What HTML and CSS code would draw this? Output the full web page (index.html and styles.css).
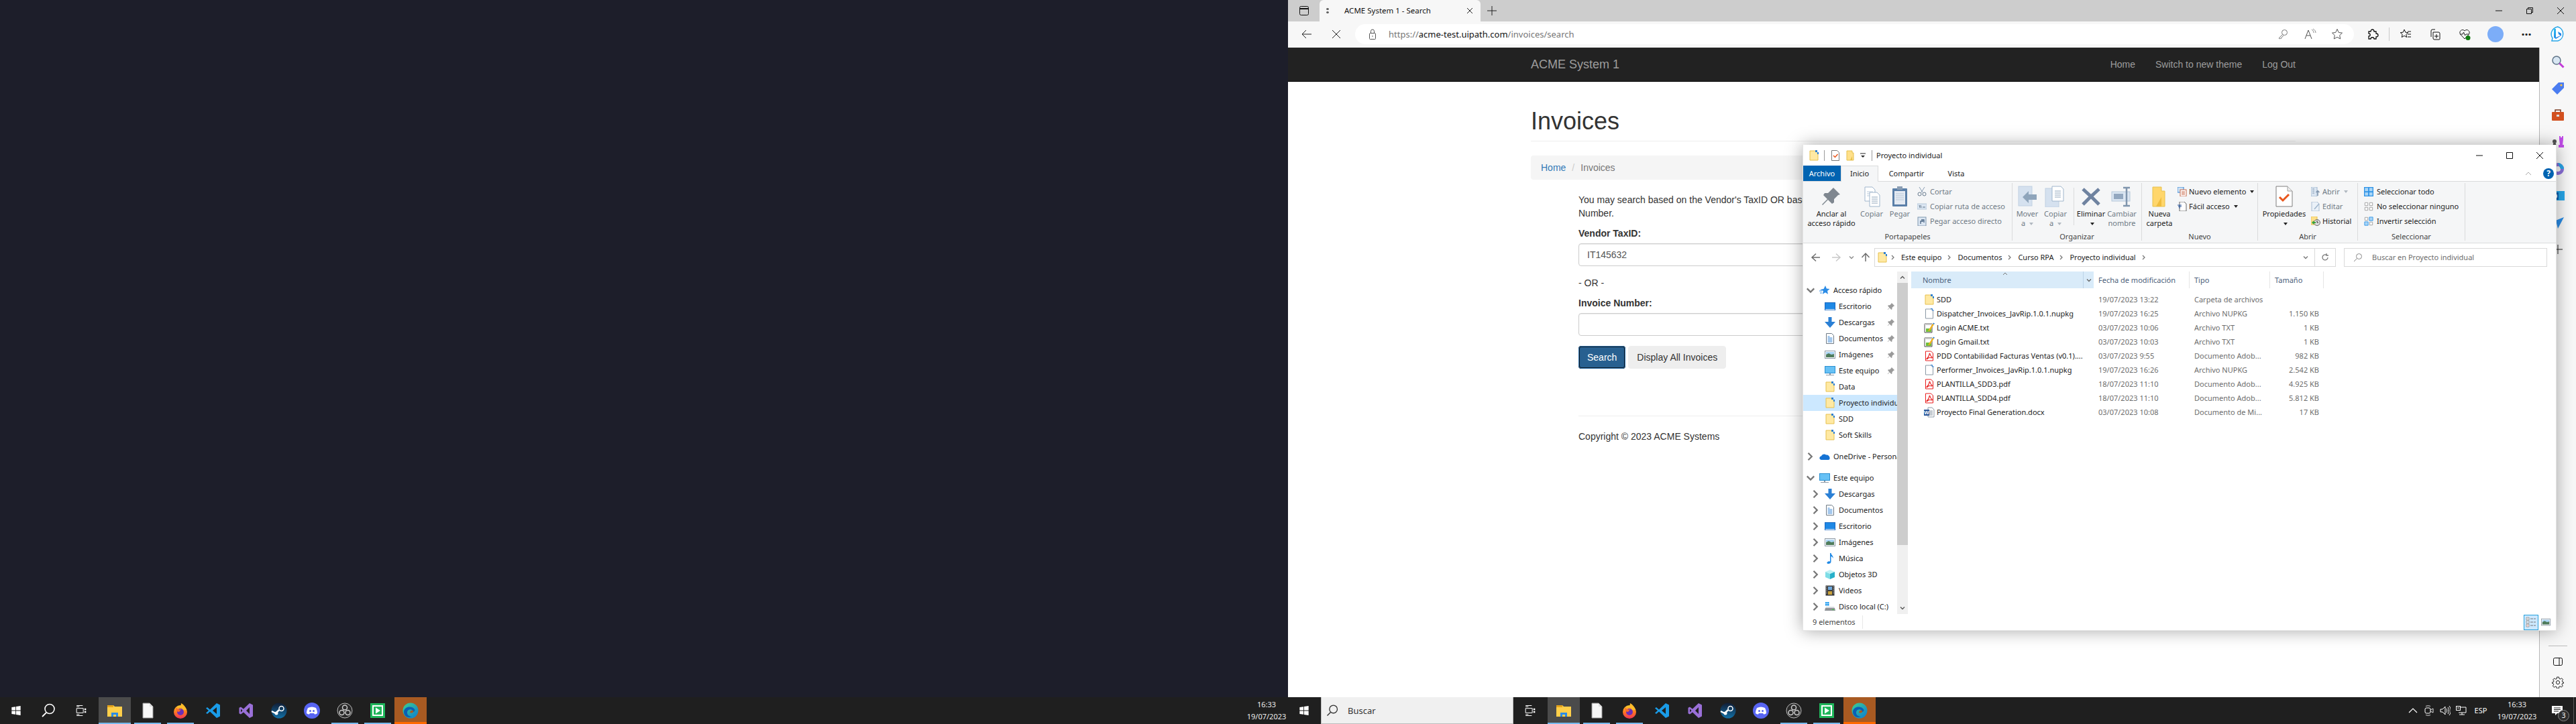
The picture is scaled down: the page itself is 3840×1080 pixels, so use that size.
FILE: index.html
```html
<!DOCTYPE html>
<html lang="es">
<head>
<meta charset="utf-8">
<title>ACME System 1 - Search</title>
<link rel="stylesheet" href="styles.css">
</head>
<body>
<svg class="sprite" aria-hidden="true">
  <defs>
    <linearGradient id="gFox" x1="0" y1="0" x2="0" y2="1"><stop offset="0" stop-color="#ffd02e"/><stop offset=".5" stop-color="#ff7a1f"/><stop offset="1" stop-color="#f0305a"/></linearGradient>
    <linearGradient id="gEdge" x1="0" y1="0" x2="1" y2="1"><stop offset="0" stop-color="#3bd08f"/><stop offset="1" stop-color="#0c7cd5"/></linearGradient>
    <linearGradient id="gBing" x1="0" y1="0" x2="1" y2="1"><stop offset="0" stop-color="#2ec4f1"/><stop offset="1" stop-color="#1762e0"/></linearGradient>
    <linearGradient id="gSteam" x1="0" y1="0" x2="0" y2="1"><stop offset="0" stop-color="#111d35"/><stop offset="1" stop-color="#126fa5"/></linearGradient>
    <symbol id="folder" viewBox="0 0 16 16"><path d="M2 1h9l3 3v11H2z" fill="#ffe9a3" stroke="#e6c04e"/><path d="M10 0h3v3h-3zM13 3h2v3h-2z" fill="#2f7fd1"/></symbol>
    <symbol id="folderPlain" viewBox="0 0 16 16"><path d="M3 1h8v3h2v11H3z" fill="#ffe08a" stroke="#e6c04e"/><path d="M11 9v6H8z" fill="#e6c04e"/></symbol>
    <symbol id="file" viewBox="0 0 16 16"><path d="M2.500 1h8l3 3v11h-11z" fill="#fff" stroke="#8b98a5"/><path d="M10 .5h2.500v2.500H15" fill="none" stroke="#2f7fd1"/></symbol>
    <symbol id="notepad" viewBox="0 0 16 16"><path d="M1 2h11v13H1z" fill="#fff" stroke="#4b4b4b"/><path d="M1 2h11v2H1z" fill="#c9c9c9"/><path d="M3 9h8v5H3z" fill="#6fbf3a"/><path d="M7 11l6-9 2 1-6 9-3 1z" fill="#f6b21b"/><path d="M13 2l1-1.500 2 1-1 1.500z" fill="#2f7fd1"/></symbol>
    <symbol id="pdf" viewBox="0 0 16 16"><path d="M2.500 1h8l3 3v11h-11z" fill="#fff" stroke="#e81c1c"/><path d="M4 12c2-1 4-5 4-7 0-1 1-1 1 0 0 2 2 4 3 5 .6.600 0 1-1 .8-3-.7-5 0-6 1.700-.5.600-1.400 0-1-.5z" fill="none" stroke="#e81c1c" stroke-width="1.100"/></symbol>
    <symbol id="word" viewBox="0 0 16 16"><path d="M6 1h6l3 3v11H6z" fill="#fff" stroke="#8b98a5"/><path d="M8 6h5M8 8h5M8 10h5M8 12h5" stroke="#8b98a5"/><rect x="0" y="4" width="8" height="9" fill="#2b579a"/><text x="4" y="11" class="svg-word">W</text></symbol>
    <symbol id="desk" viewBox="0 0 16 16"><rect x=".5" y="2.500" width="15" height="11" fill="#1e88e5" stroke="#1565c0"/><path d="M1 12h14v1.500H1z" fill="#fff" opacity=".7"/></symbol>
    <symbol id="down" viewBox="0 0 16 16"><path d="M5.500 0h5v7H16l-8 9-8-9h5.500z" fill="#2b80d5"/></symbol>
    <symbol id="docs" viewBox="0 0 16 16"><path d="M2.500 .5h8l3 3v12h-11z" fill="#fff" stroke="#6e7a86"/><path d="M4.500 5h3M4.500 7h7M4.500 9h7M4.500 11h7M4.500 13h7" stroke="#4a90d9"/></symbol>
    <symbol id="pics" viewBox="0 0 16 16"><rect x=".5" y="2.500" width="15" height="11" fill="#fff" stroke="#8b98a5"/><path d="M2 4h12v4H2z" fill="#aad4f5"/><path d="M2 8l4-2 4 2 4-1v5H2z" fill="#4f7c5c"/></symbol>
    <symbol id="pc" viewBox="0 0 16 16"><rect x=".5" y="1.500" width="15" height="10" fill="#67c1f5" stroke="#2a8fd0"/><path d="M7 12h2v2H7zM2 14h12v1H2z" fill="#8b98a5"/></symbol>
    <symbol id="music" viewBox="0 0 16 16"><path d="M8 0h1.500c0 3 4 4 3 8-.5-2-2-3-3-3v8c0 2-2 3-4 3s-3-2-1-3c1-.8 2.500-.8 3.500-.3z" fill="#1e88e5"/></symbol>
    <symbol id="cube" viewBox="0 0 16 16"><path d="M8 1l7 3-7 3-7-3z" fill="#bff1f5"/><path d="M1 4l7 3v8l-7-3z" fill="#7fdde6"/><path d="M15 4L8 7v8l7-3z" fill="#27b0c9"/></symbol>
    <symbol id="film" viewBox="0 0 16 16"><rect x="1.500" y=".5" width="13" height="15" fill="#3c3c3c"/><path d="M5 2h6v5H5z" fill="#6fa8dc"/><path d="M5 9h6v5H5z" fill="#c9a13b"/><path d="M2.500 2h1v1h-1zM2.500 5h1v1h-1zM2.500 8h1v1h-1zM2.500 11h1v1h-1zM12.500 2h1v1h-1zM12.500 5h1v1h-1zM12.500 8h1v1h-1zM12.500 11h1v1h-1z" fill="#fff"/></symbol>
    <symbol id="disk" viewBox="0 0 16 16"><path d="M1 10h14l1 4H0z" fill="#8f9397"/><path d="M2 8h12l1 2H1z" fill="#d8dadc"/><path d="M1 1h2.500v2.500H1zM4 1h2.500v2.500H4zM1 4h2.500v2.500H1zM4 4h2.500v2.500H4z" fill="#1e9bf0"/><path d="M11 12h3v1h-3z" fill="#37d23a"/></symbol>
    <symbol id="star" viewBox="0 0 16 16"><path d="M9 1l1.800 4.500L15.500 6l-3.500 3 1 4.700L9 11.300 4.800 13.800 6 9 1 7l5.500-1z" fill="#2b8ce6"/><path d="M0 9h4M1 12h3" stroke="#2b8ce6"/></symbol>
    <symbol id="cloud" viewBox="0 0 16 16"><path d="M4 13C1 13 0 11 .5 9.500 1 8 2 7.500 3 7.500 4 4.500 8 3.500 10 5.500c3-.5 5 1.500 5.500 4 .5 2-.5 3.500-2 3.500z" fill="#1573d4"/></symbol>
    <symbol id="pin" viewBox="0 0 16 16"><path d="M9 1l6 6-2 .5-3 3 0 3-1.500 1L5 11 1.500 14.500 1 14l3.500-3.500L1.500 7l1-1.500h3l3-3z" fill="#9a9a9a"/></symbol>
    <symbol id="chevR" viewBox="0 0 8 8"><path d="M2 1l3 3-3 3" fill="none" stroke="currentColor" stroke-width="1.300"/></symbol>
    <symbol id="chevD" viewBox="0 0 8 8"><path d="M1 2.500l3 3 3-3" fill="none" stroke="currentColor" stroke-width="1.300"/></symbol>
    <symbol id="copyBig" viewBox="0 0 32 32"><path d="M6 2h11l4 4v17H6z" fill="#fff" stroke="#9fb5cc"/><path d="M9 9h9M9 12h9M9 15h9" stroke="#b9c9da"/><path d="M13 10h11l4 4v17H13z" fill="#fff" stroke="#9fb5cc"/><path d="M16 17h9M16 20h9M16 23h9M16 26h9" stroke="#8fa5bb"/></symbol>
    <symbol id="paste" viewBox="0 0 32 32"><rect x="5" y="4" width="22" height="27" rx="1" fill="#5a7fa8"/><rect x="8" y="8" width="16" height="20" fill="#e4eaf2"/><path d="M10 12h12M10 15h12M10 18h12M10 21h12" stroke="#b9c9da"/><rect x="12" y="1" width="8" height="5" fill="#8a9db3"/></symbol>
    <symbol id="pinBig" viewBox="0 0 32 32"><path d="M19 3l10 10-3 1-6 6 0 5-3 2-6-6-8 8-1-1 8-8-6-6 2-3h5l6-6z" fill="#7f8790"/></symbol>
    <symbol id="moveTo" viewBox="0 0 32 32"><rect x="3" y="1" width="20" height="29" fill="#d5e1ef" stroke="#c0d0e2"/><path d="M9 17l9-9v5h12v8H18v5z" fill="#8fa5bb"/></symbol>
    <symbol id="copyTo" viewBox="0 0 32 32"><rect x="1" y="4" width="20" height="28" fill="#d5e1ef" stroke="#c0d0e2"/><path d="M11 1h13l4 4v18H11z" fill="#fff" stroke="#9fb5cc"/><path d="M15 8h9M15 11h9M15 14h9M15 17h9" stroke="#8fa5bb"/></symbol>
    <symbol id="del" viewBox="0 0 32 32"><path d="M4 5l12 11L28 5M4 28l12-12 12 12" fill="none" stroke="#6f83a0" stroke-width="5"/></symbol>
    <symbol id="rename" viewBox="0 0 32 32"><rect x="1" y="9" width="27" height="14" fill="#dbe6f2" stroke="#b6c8da"/><rect x="4" y="12" width="14" height="8" fill="#93a8c0"/><path d="M18 3h10M18 30h10M23 3v27" stroke="#7f95ad" stroke-width="2.500" fill="none"/></symbol>
    <symbol id="folderBig" viewBox="0 0 32 32"><path d="M6 2h13v6h5v23H6z" fill="#ffd66b" stroke="#e6c04e"/><path d="M19 17v14h-8z" fill="#f0bd3f"/></symbol>
    <symbol id="props" viewBox="0 0 32 32"><path d="M4 1h17l7 7v23H4z" fill="#fff" stroke="#7f7f7f"/><path d="M21 1v7h7" fill="#eee" stroke="#9f9f9f"/><path d="M9 17l5 5 9-9" fill="none" stroke="#e8561c" stroke-width="3"/></symbol>
    <symbol id="selAll" viewBox="0 0 16 16"><path d="M0 0h16v16H0z" fill="#2f93e6"/><path d="M1.500 1.500h5.500v5.500H1.500zM9 1.500h5.500v5.500H9zM1.500 9h5.500v5.500H1.500zM9 9h5.500v5.500H9z" fill="#a8d5f7"/></symbol>
    <symbol id="selNone" viewBox="0 0 16 16"><path d="M1.500 1.500h5v5h-5zM9.500 1.500h5v5h-5zM1.500 9.500h5v5h-5zM9.500 9.500h5v5h-5z" fill="#fff" stroke="#9a9a9a"/></symbol>
    <symbol id="selInv" viewBox="0 0 16 16"><path d="M1.500 1.500h5v5h-5zM9.500 9.500h5v5h-5z" fill="#fff" stroke="#9a9a9a"/><path d="M9 1h6v6H9zM1 9h6v6H1z" fill="#a8d5f7" stroke="#2f93e6"/></symbol>
    <symbol id="logoWin" viewBox="0 0 24 24"><path d="M4 6l7-1v6.500H4zM12 4.800L20 3.500v8h-8zM4 12.500h7V19l-7-1zM12 12.500h8v8l-8-1.300z" fill="#fff"/></symbol>
    <symbol id="tSearch" viewBox="0 0 24 24"><circle cx="14" cy="9.500" r="7" fill="none" stroke="currentColor" stroke-width="1.600"/><path d="M9 15l-6 6" stroke="currentColor" stroke-width="1.800"/></symbol>
    <symbol id="tView" viewBox="0 0 24 24"><path d="M5 3h11M5 5h5M5 21h11M5 19h5M5 8h12v8H5z" fill="none" stroke="#fff" stroke-width="1.200"/><path d="M19 8h3v3h-3zM19 13h3v3h-3z" fill="#fff"/></symbol>
    <symbol id="tFolder" viewBox="0 0 24 24"><path d="M1 4h9l2 2h11v15H1z" fill="#ffcf4a"/><path d="M1 4h9v3H1z" fill="#e3a21a"/><path d="M7 15h10v6h-3v-3h-4v3H7z" fill="#2b8ce6"/></symbol>
    <symbol id="tNote" viewBox="0 0 24 24"><path d="M5 1h10l5 5v17H5z" fill="#f7f7f7" stroke="#9a9a9a"/><path d="M15 1v5h5" fill="#ddd"/></symbol>
    <symbol id="tFox" viewBox="0 0 24 24"><circle cx="12" cy="14" r="10" fill="url(#gFox)"/><path d="M13 1c4 2 7 6 8 10l-5 0C14 8 12 5 13 1z" fill="#ffbc2b"/><circle cx="12" cy="14" r="5" fill="#6b2fb8"/><path d="M5 7c2 3 5 4 8 3l-3 4-4-1z" fill="#ff6a2a"/></symbol>
    <symbol id="tCode" viewBox="0 0 24 24"><path d="M17 1l5 2.500v17L17 23 7 13.500l-4 3.500-2-1.500 4-3.500-4-3.500 2-1.500 4 3.500zM17 7l-6 5 6 5z" fill="#1a9ce8"/></symbol>
    <symbol id="tVS" viewBox="0 0 24 24"><path d="M17 1l5 2.500v17L17 23 8 14.500l-4 3-2.500-1.200v-8.600L4 6.500l4 3zM17 7l-5 5 5 5zM4 9.500v5l2.500-2.500z" fill="#9a70d8"/></symbol>
    <symbol id="tSteam" viewBox="0 0 24 24"><circle cx="12" cy="12" r="11.500" fill="url(#gSteam)"/><circle cx="15.500" cy="9" r="3.500" fill="none" stroke="#fff" stroke-width="1.500"/><path d="M1 13l6 3 5-5" fill="none" stroke="#fff" stroke-width="2.500"/><circle cx="8" cy="16" r="2.500" fill="#fff"/></symbol>
    <symbol id="tDisc" viewBox="0 0 24 24"><circle cx="12" cy="12" r="12" fill="#5865f2"/><path d="M6 8c4-2 8-2 12 0 1.500 3 2 5.500 2 8-1.500 1-3 1.500-4 1.500l-1-1.500h-6l-1 1.500c-1 0-2.500-.5-4-1.500 0-2.500.5-5 2-8z" fill="#fff"/><circle cx="9.500" cy="12.500" r="1.500" fill="#5865f2"/><circle cx="14.500" cy="12.500" r="1.500" fill="#5865f2"/></symbol>
    <symbol id="tObs" viewBox="0 0 24 24"><circle cx="12" cy="12" r="11" fill="#2a2a2a" stroke="#bbb"/><circle cx="12" cy="7.500" r="3.500" fill="none" stroke="#ccc" stroke-width="1.500"/><circle cx="7.500" cy="15" r="3.500" fill="none" stroke="#ccc" stroke-width="1.500"/><circle cx="16.500" cy="15" r="3.500" fill="none" stroke="#ccc" stroke-width="1.500"/></symbol>
    <symbol id="tPlay" viewBox="0 0 24 24"><rect x="1" y="1" width="22" height="22" fill="#1fb65b"/><rect x="4" y="4" width="16" height="16" fill="#fff"/><rect x="6" y="6" width="12" height="12" fill="#1fb65b"/><path d="M9 7.500l7 4.500-7 4.500z" fill="#fff"/></symbol>
    <symbol id="tEdge" viewBox="0 0 24 24"><circle cx="12" cy="12" r="11.500" fill="url(#gEdge)"/><path d="M2 14C2 6 14 4 18 10c1 2 0 4-3 4 1-3-3-5-6-3-4 3-2 10 5 10-6 3-12-1-12-7z" fill="#0b5fb5"/><path d="M11 15c0-3 3-4 5-3 1 3-2 4-5 3z" fill="#a85a22"/></symbol>
  </defs>
</svg>

<main class="desktop">
  <section class="screen screen-left">
    <div class="wallpaper"></div>
    <footer class="taskbar">
      <div class="tb-btn"><svg class="i20"><use href="#logoWin"/></svg></div>
      <div class="tb-btn"><svg class="i24 white"><use href="#tSearch"/></svg></div>
      <div class="tb-btn"><svg class="i20"><use href="#tView"/></svg></div>
      <div class="tile wide open"><svg class="i24"><use href="#tFolder"/></svg></div>
      <div class="tile run near"><svg class="i24"><use href="#tNote"/></svg></div>
      <div class="tile run"><svg class="i24"><use href="#tFox"/></svg></div>
      <div class="tile"><svg class="i24"><use href="#tCode"/></svg></div>
      <div class="tile"><svg class="i24"><use href="#tVS"/></svg></div>
      <div class="tile"><svg class="i24"><use href="#tSteam"/></svg></div>
      <div class="tile"><svg class="i24"><use href="#tDisc"/></svg></div>
      <div class="tile run"><svg class="i24"><use href="#tObs"/></svg></div>
      <div class="tile run"><svg class="i24"><use href="#tPlay"/></svg></div>
      <div class="tile wide near alert"><svg class="i24"><use href="#tEdge"/></svg></div>
      <div class="clock clock-left"><span>16:33</span><span>19/07/2023</span></div>
    </footer>
  </section>

  <section class="screen screen-right">
    <div class="browser">
      <div class="tabstrip">
        <div class="strip-btn"><svg class="i16" viewBox="0 0 16 16"><rect x="1.500" y="1.500" width="13" height="13" rx="2" fill="none" stroke="#111"/><path d="M1.500 5h13" stroke="#111" stroke-width="2"/></svg></div>
        <div class="tab">
          <span class="tab-spin"></span>
          <span class="tab-title">ACME System 1 - Search</span>
          <svg class="i10" viewBox="0 0 10 10"><path d="M1 1l8 8M9 1l-8 8" stroke="#222"/></svg>
        </div>
        <div class="new-tab"><svg class="i16" viewBox="0 0 16 16"><path d="M8 1v14M1 8h14" stroke="#222"/></svg></div>
        <div class="win-btns">
          <svg class="i12" viewBox="0 0 12 12"><path d="M1 6h10" stroke="#111"/></svg>
          <svg class="i12" viewBox="0 0 12 12"><path d="M1.500 3.500h7v7h-7zM3.500 3.500v-2h7v7h-2" fill="none" stroke="#111"/></svg>
          <svg class="i12" viewBox="0 0 12 12"><path d="M1 1l10 10M11 1L1 11" stroke="#111"/></svg>
        </div>
      </div>
      <div class="toolbar">
        <svg class="i16 tool-back" viewBox="0 0 16 16"><path d="M15 8H1M7 2L1 8l6 6" fill="none" stroke="#222"/></svg>
        <svg class="i12 tool-stop" viewBox="0 0 12 12"><path d="M0 0l12 12M12 0L0 12" stroke="#222"/></svg>
        <div class="omnibox">
          <svg class="i16" viewBox="0 0 16 16"><rect x="3.500" y="6.500" width="9" height="9" rx="1" fill="none" stroke="#555"/><path d="M5.500 6.500V3.500a2.500 2.500 0 0 1 5 0v3" fill="none" stroke="#555"/><circle cx="8" cy="11" r=".8" fill="#555"/></svg>
          <span class="url"><span class="dim">https://</span>acme-test.uipath.com<span class="dim">/invoices/search</span></span>
          <svg class="i16 omni-key" viewBox="0 0 16 16"><circle cx="10.500" cy="5.500" r="4" fill="none" stroke="#777"/><path d="M7.500 8.500L2 14l1.500 1 1-1 1 .5.500-1.500 3-3" fill="none" stroke="#777"/></svg>
          <svg class="i18 omni-read" viewBox="0 0 18 18"><path d="M1 16L6 3l5 13M3 11h6" fill="none" stroke="#555"/><path d="M11 2c2 1 3 3 3 5M13 1c2 1.500 4 3 4 6" fill="none" stroke="#888"/></svg>
          <svg class="i18 omni-star" viewBox="0 0 18 18"><path d="M9 1.500l2.300 5 5.200.6-3.800 3.600 1 5.300L9 13.400 4.300 16l1-5.300L1.500 7.100l5.200-.6z" fill="none" stroke="#555"/></svg>
        </div>
        <svg class="i18 tool-ext" viewBox="0 0 18 18"><path d="M3 5h3c0-4 5-4 5 0h3v3c4 0 4 5 0 5v3h-3c0-3-5-3-5 0H3v-4c3 0 3-4 0-4z" fill="none" stroke="#111" stroke-width="1.300"/></svg>
        <span class="tool-sep"></span>
        <svg class="i18 tool-fav" viewBox="0 0 18 18"><path d="M7 2l1.800 4.200 4 .4-3 2.800.9 4.100L7 11.400 3.300 13.500l.9-4.100-3-2.800 4-.4zM12 5h5M12 9h5M12 13h5" fill="none" stroke="#111"/></svg>
        <svg class="i18 tool-col" viewBox="0 0 18 18"><path d="M3 13V4a2 2 0 0 1 2-2h4M6 6h8a2 2 0 0 1 2 2v8a1 1 0 0 1-1 1H8a2 2 0 0 1-2-2zM11 9v6M8 12h6" fill="none" stroke="#111"/></svg>
        <svg class="i18 tool-health" viewBox="0 0 18 18"><path d="M9 16L2.500 9C0 5 5 0 9 4c4-4 9 1 6.500 5zM2 9h4l1.500-3 2 5 1.500-2h4" fill="none" stroke="#222"/><circle cx="14" cy="14.500" r="3.500" fill="#107c10"/></svg>
        <span class="avatar"></span>
        <span class="tool-dots">···</span>
        <svg class="i24 tool-bing" viewBox="0 0 24 24"><path d="M12 1a11 11 0 0 1 0 21H3l1-4A11 11 0 0 1 12 1z" fill="#fff" stroke="#28a6e8" stroke-width="1.500"/><path d="M9 4v13l7-3-3-2-1-4 5 3v3l-8 5-3-2V4z" fill="url(#gBing)"/></svg>
      </div>
      <div class="browser-body">
        <div class="page">
          <nav class="navbar">
            <div class="nav-inner">
              <a class="brand">ACME System 1</a>
              <div class="nav-links">
                <a>Home</a>
                <a>Switch to new theme</a>
                <a>Log Out</a>
              </div>
            </div>
          </nav>
          <div class="container">
            <div class="page-header"><h1>Invoices</h1></div>
            <ol class="breadcrumb">
              <li class="crumb-link">Home</li>
              <li class="crumb-sep">/</li>
              <li class="crumb-active">Invoices</li>
            </ol>
            <div class="content-col">
              <p class="intro">You may search based on the Vendor's TaxID OR based on the Invoice Number.</p>
              <label class="field-label">Vendor TaxID:</label>
              <div class="form-control">IT145632</div>
              <p class="or">- OR -</p>
              <label class="field-label">Invoice Number:</label>
              <div class="form-control"></div>
              <div class="actions">
                <button class="btn btn-primary">Search</button>
                <button class="btn btn-default">Display All Invoices</button>
              </div>
              <hr class="foot-rule">
              <p class="copyright">Copyright © 2023 ACME Systems</p>
            </div>
          </div>
        </div>
        <aside class="sidebar">
          <div class="side-icons">
            <svg class="i20" viewBox="0 0 20 20"><circle cx="8" cy="8" r="6" fill="#d8e6f2" stroke="#5f7488" stroke-width="1.500"/><path d="M12.500 12.500l6 6" stroke="#c13ad8" stroke-width="3"/></svg>
            <svg class="i20" viewBox="0 0 20 20"><path d="M11 1h8v8l-10 10L1 11z" fill="#4a7cf0"/><circle cx="15" cy="5" r="1.600" fill="#ffc83d"/></svg>
            <svg class="i20" viewBox="0 0 20 20"><rect x="1" y="5" width="18" height="13" rx="1" fill="#d2501f"/><path d="M6 5V2h8v3" fill="none" stroke="#7a3a20" stroke-width="1.500"/><rect x="8" y="9" width="4" height="3" fill="#ddd"/></svg>
            <svg class="i20" viewBox="0 0 20 20"><path d="M12 1h2v2h2V1h2v5l-1 8h2v4h-8v-4h2l-1-8z" fill="#c04de8"/><circle cx="5" cy="9" r="3" fill="#555"/><path d="M3 12h4l1 6H2z" fill="#444"/></svg>
            <svg class="i20" viewBox="0 0 20 20"><circle cx="10" cy="10" r="9" fill="#8a6fd8"/><circle cx="10" cy="10" r="4" fill="#f4f4f4"/><path d="M10 1a9 9 0 0 1 9 9h-5z" fill="#28a6e8"/></svg>
            <svg class="i20" viewBox="0 0 20 20"><rect x="6" y="3" width="14" height="14" fill="#28a8ea"/><rect x="0" y="5" width="11" height="11" fill="#0a5fb0"/><circle cx="5.500" cy="10.500" r="3" fill="none" stroke="#fff" stroke-width="1.500"/></svg>
            <svg class="i20" viewBox="0 0 20 20"><path d="M19 2L1 9l7 2 2 8z" fill="#2a8ce6"/></svg>
            <svg class="i16 side-plus" viewBox="0 0 16 16"><path d="M8 1v14M1 8h14" stroke="#222"/></svg>
          </div>
          <div class="side-bottom">
            <span class="side-rule"></span>
            <svg class="i16" viewBox="0 0 16 16"><rect x="1.500" y="2.500" width="13" height="11" rx="2" fill="none" stroke="#111"/><path d="M10 2.500v11" stroke="#111"/></svg>
            <svg class="i18" viewBox="0 0 18 18"><circle cx="9" cy="9" r="2.600" fill="none" stroke="#222"/><path d="M7.500 1h3l.4 2.300 1.700.7 2-1.300 2 2-1.300 2 .7 1.700L18 9v1l-2.300.4-.7 1.700 1.300 2-2 2-2-1.300-1.700.7L10.500 18h-3l-.4-2.300-1.700-.7-2 1.300-2-2 1.300-2-.7-1.700L0 10V9l2.300-.4.7-1.700-1.300-2 2-2 2 1.300 1.700-.7z" fill="none" stroke="#222"/></svg>
          </div>
        </aside>
      </div>
    </div>

    <div class="explorer">
      <div class="ex-title">
        <svg class="i16"><use href="#folder"/></svg>
        <span class="ex-bar"></span>
        <svg class="i16 qa-doc" viewBox="0 0 16 16"><path d="M2.500 .5h8l3 3v12h-11z" fill="#fff" stroke="#777"/><path d="M5 8l2.500 2.500L11.500 6" fill="none" stroke="#e8561c" stroke-width="1.500"/></svg>
        <svg class="i16"><use href="#folderPlain"/></svg>
        <svg class="i10 qa-arrow" viewBox="0 0 10 10"><path d="M1 2h8" stroke="#222"/><path d="M2 5h6L5 8z" fill="#222"/></svg>
        <span class="ex-bar"></span>
        <span class="ex-name">Proyecto individual</span>
        <div class="ex-wbtns">
          <svg class="i12" viewBox="0 0 12 12"><path d="M1 6h10" stroke="#111"/></svg>
          <svg class="i12" viewBox="0 0 12 12"><path d="M1.500 1.500h9v9h-9z" fill="none" stroke="#111"/></svg>
          <svg class="i12" viewBox="0 0 12 12"><path d="M1 1l10 10M11 1L1 11" stroke="#111"/></svg>
        </div>
      </div>
      <div class="ex-tabs">
        <span class="ex-tab file-tab">Archivo</span>
        <span class="ex-tab active-tab">Inicio</span>
        <span class="ex-tab share-tab">Compartir</span>
        <span class="ex-tab view-tab">Vista</span>
        <svg class="i10 ribbon-up" viewBox="0 0 10 10"><path d="M1 7l4-4 4 4" fill="none" stroke="#aaa"/></svg>
        <span class="help">?</span>
      </div>
      <div class="ribbon">
        <div class="rgroup g-port">
          <div class="rbody">
            <div class="rlg w84"><svg class="i32"><use href="#pinBig"/></svg><span>Anclar al<br>acceso rápido</span></div>
            <div class="rlg w36 off"><svg class="i32"><use href="#copyBig"/></svg><span>Copiar</span></div>
            <div class="rlg w42 off gap3"><svg class="i32"><use href="#paste"/></svg><span>Pegar</span></div>
            <div class="rsmall off gap5">
              <div><svg class="i14" viewBox="0 0 14 14"><path d="M3 0l5 8M11 0L6 8" stroke="#8a9db3" fill="none"/><circle cx="3.500" cy="10.500" r="2.500" fill="none" stroke="#5f7488"/><circle cx="10.500" cy="10.500" r="2.500" fill="none" stroke="#5f7488"/></svg>Cortar</div>
              <div><svg class="i14" viewBox="0 0 14 14"><rect x="0" y="3" width="14" height="8" fill="#dbe6f2" stroke="#b6c8da"/><path d="M3 5l1 4M5 5l1 4M8 8h4" stroke="#5f7488"/></svg>Copiar ruta de acceso</div>
              <div><svg class="i14" viewBox="0 0 14 14"><rect x="1" y="1" width="12" height="13" fill="#dbe6f2" stroke="#7f95ad"/><path d="M5 11V7h4M6 5h4v4" fill="none" stroke="#4a6684" stroke-width="1.300"/></svg>Pegar acceso directo</div>
            </div>
          </div>
          <div class="rlabel">Portapapeles</div>
        </div>
        <div class="rgroup g-org">
          <div class="rbody">
            <div class="rlg w38 off ml3"><svg class="i32"><use href="#moveTo"/></svg><span>Mover<br>a <i class="caret-off"></i></span></div>
            <div class="rlg w42 off ml2"><svg class="i32"><use href="#copyTo"/></svg><span>Copiar<br>a <i class="caret-off"></i></span></div>
            <span class="rsep"></span>
            <div class="rlg w46 ml2"><svg class="i32"><use href="#del"/></svg><span>Eliminar<br><i class="caret"></i></span></div>
            <div class="rlg w46 off"><svg class="i32"><use href="#rename"/></svg><span>Cambiar<br>nombre</span></div>
          </div>
          <div class="rlabel">Organizar</div>
        </div>
        <div class="rgroup g-new">
          <div class="rbody">
            <div class="rlg w44 ml4"><svg class="i32"><use href="#folderBig"/></svg><span>Nueva<br>carpeta</span></div>
            <div class="rsmall gap5 tight">
              <div><svg class="i14" viewBox="0 0 14 14"><rect x="0" y="0" width="9" height="8" fill="#cfe3f5" stroke="#2f7fd1"/><rect x="4" y="4" width="9" height="10" fill="#fff" stroke="#c96a4a"/><path d="M6 7h5M6 9h5M6 11h5" stroke="#c96a4a"/></svg>Nuevo elemento <i class="caret"></i></div>
              <div><svg class="i14" viewBox="0 0 14 14"><path d="M3 0h7l3 3v11H3z" fill="#fff" stroke="#666"/><path d="M0 5h6M1 7h5M3 5v5" stroke="#2b579a"/></svg>Fácil acceso <i class="caret"></i></div>
            </div>
          </div>
          <div class="rlabel">Nuevo</div>
        </div>
        <div class="rgroup g-open">
          <div class="rbody">
            <div class="rlg w72 ml3"><svg class="i32"><use href="#props"/></svg><span>Propiedades<br><i class="caret"></i></span></div>
            <div class="rsmall gap4 tight">
              <div class="off"><svg class="i14" viewBox="0 0 14 14"><rect x="0" y="0" width="9" height="14" fill="#dbe6f2" stroke="#9fb5cc"/><path d="M2 3h3M2 6h3M2 9h3" stroke="#7f95ad"/><path d="M10 13V6M7.500 8L10 5.500 12.500 8" fill="none" stroke="#7f95ad" stroke-width="1.500"/></svg>Abrir <i class="caret-off"></i></div>
              <div class="off"><svg class="i14" viewBox="0 0 14 14"><path d="M1 0h8l3 3v11H1z" fill="#eaf1f8" stroke="#a9bdd2"/><path d="M5 11l7-8" stroke="#9fb5cc" stroke-width="1.500"/></svg>Editar</div>
              <div><svg class="i14" viewBox="0 0 14 14"><path d="M0 0h9v12H0z" fill="#ffe08a" stroke="#e6c04e"/><circle cx="9" cy="9" r="4.500" fill="#ddd" stroke="#666"/><path d="M9 6v3h2" fill="none" stroke="#333"/><path d="M1 9l3-3v2h3v2H4v2z" fill="#37a53a"/></svg>Historial</div>
            </div>
          </div>
          <div class="rlabel">Abrir</div>
        </div>
        <div class="rgroup g-sel">
          <div class="rbody">
            <div class="rsmall ml10">
              <div><svg class="i14"><use href="#selAll"/></svg>Seleccionar todo</div>
              <div><svg class="i14"><use href="#selNone"/></svg>No seleccionar ninguno</div>
              <div><svg class="i14"><use href="#selInv"/></svg>Invertir selección</div>
            </div>
          </div>
          <div class="rlabel">Seleccionar</div>
        </div>
      </div>
      <div class="addr-row">
        <svg class="i16 nav-back" viewBox="0 0 16 16"><path d="M14 8H2M8 2.500L2 8l6 5.500" fill="none" stroke="#6d6d6d" stroke-width="1.500"/></svg>
        <svg class="i16 nav-fwd" viewBox="0 0 16 16"><path d="M2 8h12M8 2.500L14 8l-6 5.500" fill="none" stroke="#c9c9c9" stroke-width="1.500"/></svg>
        <svg class="i8 nav-drop"><use href="#chevD"/></svg>
        <svg class="i16 nav-up" viewBox="0 0 16 16"><path d="M8 14V2M2.500 8L8 2l5.500 6" fill="none" stroke="#6d6d6d" stroke-width="1.500"/></svg>
        <div class="addr-box">
          <svg class="i16 addr-folder"><use href="#folder"/></svg>
          <svg class="i8 chev"><use href="#chevR"/></svg><span>Este equipo</span>
          <svg class="i8 chev"><use href="#chevR"/></svg><span>Documentos</span>
          <svg class="i8 chev"><use href="#chevR"/></svg><span>Curso RPA</span>
          <svg class="i8 chev"><use href="#chevR"/></svg><span>Proyecto individual</span>
          <svg class="i8 chev"><use href="#chevR"/></svg>
          <svg class="i8 chev addr-drop"><use href="#chevD"/></svg>
          <span class="addr-refresh"><svg class="i12" viewBox="0 0 12 12"><path d="M10 6a4 4 0 1 1-2-3.500M8 0v3h3" fill="none" stroke="#7a7a7a" stroke-width="1.300"/></svg></span>
        </div>
        <div class="search-box">
          <svg class="i14" viewBox="0 0 14 14"><circle cx="8.500" cy="5.500" r="4" fill="none" stroke="#888"/><path d="M5.500 8.500L1 13" stroke="#888"/></svg>
          <span>Buscar en Proyecto individual</span>
        </div>
      </div>
      <div class="ex-main">
        <div class="tree-wrap">
          <div class="tree">
            <div class="tr lv1"><svg class="i14 tw"><use href="#chevD"/></svg><svg class="i16"><use href="#star"/></svg><span>Acceso rápido</span></div>
            <div class="tr lv2"><i class="tw"></i><svg class="i16"><use href="#desk"/></svg><span>Escritorio</span><svg class="i12 pinned"><use href="#pin"/></svg></div>
            <div class="tr lv2"><i class="tw"></i><svg class="i16"><use href="#down"/></svg><span>Descargas</span><svg class="i12 pinned"><use href="#pin"/></svg></div>
            <div class="tr lv2"><i class="tw"></i><svg class="i16"><use href="#docs"/></svg><span>Documentos</span><svg class="i12 pinned"><use href="#pin"/></svg></div>
            <div class="tr lv2"><i class="tw"></i><svg class="i16"><use href="#pics"/></svg><span>Imágenes</span><svg class="i12 pinned"><use href="#pin"/></svg></div>
            <div class="tr lv2"><i class="tw"></i><svg class="i16"><use href="#pc"/></svg><span>Este equipo</span><svg class="i12 pinned"><use href="#pin"/></svg></div>
            <div class="tr lv2"><i class="tw"></i><svg class="i16"><use href="#folder"/></svg><span>Data</span></div>
            <div class="tr lv2 sel"><i class="tw"></i><svg class="i16"><use href="#folder"/></svg><span>Proyecto individual</span></div>
            <div class="tr lv2"><i class="tw"></i><svg class="i16"><use href="#folder"/></svg><span>SDD</span></div>
            <div class="tr lv2"><i class="tw"></i><svg class="i16"><use href="#folder"/></svg><span>Soft Skills</span></div>
            <div class="tr lv1 sect"><svg class="i14 tw"><use href="#chevR"/></svg><svg class="i16"><use href="#cloud"/></svg><span>OneDrive - Personal</span></div>
            <div class="tr lv1 sect"><svg class="i14 tw"><use href="#chevD"/></svg><svg class="i16"><use href="#pc"/></svg><span>Este equipo</span></div>
            <div class="tr lv2"><svg class="i14 tw"><use href="#chevR"/></svg><svg class="i16"><use href="#down"/></svg><span>Descargas</span></div>
            <div class="tr lv2"><svg class="i14 tw"><use href="#chevR"/></svg><svg class="i16"><use href="#docs"/></svg><span>Documentos</span></div>
            <div class="tr lv2"><svg class="i14 tw"><use href="#chevR"/></svg><svg class="i16"><use href="#desk"/></svg><span>Escritorio</span></div>
            <div class="tr lv2"><svg class="i14 tw"><use href="#chevR"/></svg><svg class="i16"><use href="#pics"/></svg><span>Imágenes</span></div>
            <div class="tr lv2"><svg class="i14 tw"><use href="#chevR"/></svg><svg class="i16"><use href="#music"/></svg><span>Música</span></div>
            <div class="tr lv2"><svg class="i14 tw"><use href="#chevR"/></svg><svg class="i16"><use href="#cube"/></svg><span>Objetos 3D</span></div>
            <div class="tr lv2"><svg class="i14 tw"><use href="#chevR"/></svg><svg class="i16"><use href="#film"/></svg><span>Videos</span></div>
            <div class="tr lv2"><svg class="i14 tw"><use href="#chevR"/></svg><svg class="i16"><use href="#disk"/></svg><span>Disco local (C:)</span></div>
          </div>
          <div class="vscroll">
            <svg class="i8 sb-arrow"><use href="#chevD"/></svg>
            <div class="sb-thumb"></div>
            <svg class="i8 sb-arrow sb-down"><use href="#chevD"/></svg>
          </div>
        </div>
        <div class="files">
          <div class="fhead">
            <div class="fh sorted">Nombre<svg class="i8 sort-up" viewBox="0 0 8 8"><path d="M1 5l3-3 3 3" fill="none" stroke="#777"/></svg><span class="fh-drop"><svg class="i8"><use href="#chevD"/></svg></span></div>
            <div class="fh">Fecha de modificación</div>
            <div class="fh">Tipo</div>
            <div class="fh">Tamaño</div>
          </div>
          <div class="frow"><div class="fname"><svg class="i16"><use href="#folder"/></svg>SDD</div><div>19/07/2023 13:22</div><div>Carpeta de archivos</div><div class="fsize"></div></div>
          <div class="frow"><div class="fname"><svg class="i16"><use href="#file"/></svg>Dispatcher_Invoices_JavRip.1.0.1.nupkg</div><div>19/07/2023 16:25</div><div>Archivo NUPKG</div><div class="fsize">1.150 KB</div></div>
          <div class="frow"><div class="fname"><svg class="i16"><use href="#notepad"/></svg>Login ACME.txt</div><div>03/07/2023 10:06</div><div>Archivo TXT</div><div class="fsize">1 KB</div></div>
          <div class="frow"><div class="fname"><svg class="i16"><use href="#notepad"/></svg>Login Gmail.txt</div><div>03/07/2023 10:03</div><div>Archivo TXT</div><div class="fsize">1 KB</div></div>
          <div class="frow"><div class="fname"><svg class="i16"><use href="#pdf"/></svg>PDD Contabilidad Facturas Ventas (v0.1)....</div><div>03/07/2023 9:55</div><div>Documento Adob...</div><div class="fsize">982 KB</div></div>
          <div class="frow"><div class="fname"><svg class="i16"><use href="#file"/></svg>Performer_Invoices_JavRip.1.0.1.nupkg</div><div>19/07/2023 16:26</div><div>Archivo NUPKG</div><div class="fsize">2.542 KB</div></div>
          <div class="frow"><div class="fname"><svg class="i16"><use href="#pdf"/></svg>PLANTILLA_SDD3.pdf</div><div>18/07/2023 11:10</div><div>Documento Adob...</div><div class="fsize">4.925 KB</div></div>
          <div class="frow"><div class="fname"><svg class="i16"><use href="#pdf"/></svg>PLANTILLA_SDD4.pdf</div><div>18/07/2023 11:10</div><div>Documento Adob...</div><div class="fsize">5.812 KB</div></div>
          <div class="frow"><div class="fname"><svg class="i16"><use href="#word"/></svg>Proyecto Final Generation.docx</div><div>03/07/2023 10:08</div><div>Documento de Mi...</div><div class="fsize">17 KB</div></div>
        </div>
      </div>
      <div class="ex-status">
        <span class="count">9 elementos</span>
        <span class="view-details"><svg class="i16" viewBox="0 0 16 16"><path d="M1 1h4v4H1zM1 6h4v4H1zM1 11h4v4H1z" fill="#fff" stroke="#999"/><path d="M2.500 2.500h1v1h-1z" fill="#555"/><path d="M2.500 7.500h1v1h-1z" fill="#2f7fd1"/><path d="M2.500 12.500h1v1h-1z" fill="#d22"/><path d="M7 3h4M12 3h3M7 8h4M12 8h3M7 13h4M12 13h3" stroke="#777"/></svg></span>
        <svg class="i14 view-thumb"><use href="#pics"/></svg>
      </div>
    </div>

    <footer class="taskbar">
      <div class="tb-btn"><svg class="i20"><use href="#logoWin"/></svg></div>
      <div class="search-field"><svg class="i20 dark"><use href="#tSearch"/></svg><span>Buscar</span></div>
      <div class="tb-btn"><svg class="i20"><use href="#tView"/></svg></div>
      <div class="tile wide open"><svg class="i24"><use href="#tFolder"/></svg></div>
      <div class="tile run near"><svg class="i24"><use href="#tNote"/></svg></div>
      <div class="tile run"><svg class="i24"><use href="#tFox"/></svg></div>
      <div class="tile"><svg class="i24"><use href="#tCode"/></svg></div>
      <div class="tile"><svg class="i24"><use href="#tVS"/></svg></div>
      <div class="tile"><svg class="i24"><use href="#tSteam"/></svg></div>
      <div class="tile"><svg class="i24"><use href="#tDisc"/></svg></div>
      <div class="tile run"><svg class="i24"><use href="#tObs"/></svg></div>
      <div class="tile run"><svg class="i24"><use href="#tPlay"/></svg></div>
      <div class="tile wide near alert"><svg class="i24"><use href="#tEdge"/></svg></div>
      <div class="tray">
        <span class="tray-ic"><svg class="i14" viewBox="0 0 14 14"><path d="M1 10l6-6 6 6" fill="none" stroke="#fff" stroke-width="1.200"/></svg></span>
        <span class="tray-ic"><svg class="i16" viewBox="0 0 16 16"><rect x="2" y="4" width="8" height="8" rx="2" fill="none" stroke="#fff"/><path d="M10 7l4-2v6l-4-2M3 1.500c2-1 5-1 7 0M3 14.500c2 1 5 1 7 0" fill="none" stroke="#ddd"/></svg></span>
        <span class="tray-ic"><svg class="i16" viewBox="0 0 16 16"><path d="M1 6h3l4-4v12l-4-4H1zM10 5c1 2 1 4 0 6M12 3c2 3 2 7 0 10M14 1c3 4 3 10 0 14" fill="none" stroke="#fff"/></svg></span>
        <span class="tray-ic"><svg class="i16" viewBox="0 0 16 16"><path d="M4 3h11v8H4M9 11v3M5 14h8" fill="none" stroke="#fff"/><rect x="0.500" y="1.500" width="6" height="6" fill="#1f1f1f" stroke="#fff"/><path d="M2 4h3" stroke="#fff"/></svg></span>
        <span class="tray-lang">ESP</span>
        <div class="clock clock-right"><span>16:33</span><span>19/07/2023</span></div>
        <span class="notify">
          <svg class="i18" viewBox="0 0 18 18"><path d="M1 2h16v11H9l-3 3v-3H1z" fill="#fff"/><path d="M4 5h10M4 7.500h10M4 10h7" stroke="#1f1f1f"/></svg>
          <span class="notify-badge">3</span>
        </span>
        <span class="show-desktop"></span>
      </div>
    </footer>
  </section>
</main>
</body>
</html>
```

FILE: styles.css
```css
* { box-sizing: border-box; }
html, body { margin: 0; padding: 0; }
body { width: 3840px; height: 1080px; overflow: hidden; font-family: "Liberation Sans", Arial, sans-serif; font-size: 14px; line-height: 20px; color: #333; }
.sprite { position: absolute; width: 0; height: 0; }
svg { display: block; flex: none; overflow: hidden; }
.svg-word { font: bold 8px "Liberation Sans", sans-serif; fill: #fff; text-anchor: middle; }
.i8 { width: 8px; height: 8px; }
.i10 { width: 10px; height: 10px; }
.i12 { width: 12px; height: 12px; }
.i14 { width: 14px; height: 14px; }
.i16 { width: 16px; height: 16px; }
.i18 { width: 18px; height: 18px; }
.i20 { width: 20px; height: 20px; }
.i24 { width: 24px; height: 24px; }
.i32 { width: 32px; height: 32px; }
.white { color: #fff; }
.dark { color: #333; }

.desktop { display: flex; width: 3840px; height: 1080px; }
.screen { position: relative; width: 1920px; height: 1080px; display: flex; flex-direction: column; }
.wallpaper { flex: 1; background: #1d1e2a; }

/* taskbar */
.taskbar { height: 40px; flex: none; display: flex; align-items: stretch; background: #1f1f1f; color: #fff; font-family: "Noto Sans", sans-serif; }
.tb-btn { width: 48px; display: flex; align-items: center; justify-content: center; }
.tile { width: 40px; margin-left: 9px; display: flex; align-items: center; justify-content: center; position: relative; }
.tile.wide { width: 48px; }
.tile.near { margin-left: 5px; }
.tile.open { margin-left: 3px; background: #4b4b4b; box-shadow: inset 0 -2px 0 #76b9ed; }
.tile.run { box-shadow: inset 0 -2px 0 #76b9ed; }
.tile.alert { background: #a85a22; box-shadow: inset 0 -3px 0 #ff6a00; }
.clock { display: flex; flex-direction: column; align-items: center; justify-content: center; font-size: 11px; line-height: 18px; color: #eee; }
.clock-left { margin-left: auto; width: 64px; }
.search-field { width: 287px; margin-left: 1px; background: #f0f0f0; border: 1px solid #bcbcbc; border-top: 0; display: flex; align-items: center; padding-left: 6px; gap: 13px; color: #333; font-size: 13px; }
.tray { margin-left: auto; display: flex; align-items: center; height: 100%; }
.tray-ic { width: 24px; display: flex; justify-content: center; }
.tray-lang { width: 34px; text-align: center; font-size: 11px; color: #fff; }
.clock-right { width: 68px; margin-left: 3px; }
.notify { width: 48px; margin-left: 2px; height: 100%; display: flex; align-items: center; justify-content: center; position: relative; }
.notify-badge { position: absolute; left: 25px; top: 19px; width: 17px; height: 17px; border-radius: 50%; background: #2e2e2e; border: 1px solid #888; font-size: 10px; line-height: 15px; text-align: center; color: #fff; }
.show-desktop { width: 4px; height: 100%; border-left: 1px solid #5a5a5a; }

/* browser */
.browser { flex: 1; display: flex; flex-direction: column; min-height: 0; font-family: "Noto Sans", sans-serif; }
.tabstrip { height: 32px; flex: none; background: #cdcdcd; display: flex; align-items: flex-end; }
.strip-btn { width: 47px; height: 32px; display: flex; align-items: center; justify-content: center; }
.tab { width: 240px; height: 32px; background: #f7f7f7; border-radius: 6px 6px 0 0; display: flex; align-items: center; padding: 0 11px 0 10px; font-size: 11.500px; color: #111; }
.tab-spin { width: 4px; height: 8px; margin-right: 23px; background: radial-gradient(circle at 2px 1.500px, #666 1.500px, transparent 2px), radial-gradient(circle at 2px 6.500px, #666 1.500px, transparent 2px); }
.tab-title { flex: 1; }
.new-tab { width: 34px; height: 32px; display: flex; align-items: center; justify-content: center; }
.win-btns { margin-left: auto; height: 32px; display: flex; align-items: center; gap: 34px; padding-right: 17px; }
.toolbar { height: 39px; flex: none; background: #f7f7f7; display: flex; align-items: center; position: relative; padding-bottom: 2px; }
.tool-back { margin-left: 20px; }
.tool-stop { margin-left: 30px; }
.omnibox { width: 1489px; height: 30px; margin-left: 22px; background: #fff; border-radius: 15px; display: flex; align-items: center; padding-left: 18px; }
.url { margin-left: 16px; font-size: 13px; color: #111; flex: 1; }
.url .dim { color: #767676; }
.omni-key { margin-right: 24px; }
.omni-read { margin-right: 22px; }
.omni-star { margin-right: 16px; }
.tool-ext { margin-left: 19px; }
.tool-sep { width: 1px; height: 20px; background: #c9c9c9; margin-left: 15px; }
.tool-fav { margin-left: 15px; }
.tool-col { margin-left: 26px; }
.tool-health { margin-left: 26px; }
.avatar { width: 24px; height: 24px; border-radius: 50%; background: #7cadf8; margin-left: 25px; }
.tool-dots { width: 20px; margin-left: 24px; text-align: center; font-size: 18px; line-height: 18px; font-weight: bold; color: #222; }
.tool-bing { margin-left: 25px; }
.browser-body { flex: 1; min-height: 0; display: flex; }
.page { width: 1865px; background: #fff; overflow: hidden; font-family: "Liberation Sans", Arial, sans-serif; }
.navbar { height: 51px; background: #222; border-bottom: 1px solid #080808; }
.nav-inner { width: 1140px; margin-left: 362px; height: 50px; display: flex; align-items: center; justify-content: space-between; color: #9d9d9d; }
.brand { font-size: 18px; }
.nav-links { display: flex; gap: 30px; }
.container { width: 1140px; margin-left: 362px; }
.page-header { margin: 0 0 21px; padding-bottom: 9px; border-bottom: 1px solid #eee; height: 89px; display: flex; align-items: flex-end; }
h1 { margin: 0; font-size: 36px; font-weight: 500; line-height: 40px; color: #333; }
.breadcrumb { list-style: none; margin: 0 0 20px; padding: 8px 15px; height: 36px; background: #f5f5f5; border-radius: 4px; display: flex; }
.crumb-link { color: #337ab7; }
.crumb-sep { color: #ccc; padding: 0 9px; }
.crumb-active { color: #777; }
.content-col { width: 450px; margin-left: 71px; }
.intro { margin: 0 0 10px; }
.field-label { display: block; font-weight: 700; margin-bottom: 5px; }
.form-control { height: 34px; padding: 6px 12px; margin-bottom: 15px; border: 1px solid #ccc; border-radius: 4px; color: #555; background: #fff; box-shadow: inset 0 1px 1px rgba(0,0,0,.075); }
.or { margin: 0 0 10px; }
.actions { display: flex; gap: 4px; height: 34px; }
.btn { font: 14px/20px "Liberation Sans", Arial, sans-serif; padding: 6px 12px; border-radius: 4px; border: 1px solid transparent; }
.btn-primary { color: #fff; background: #286090; border: 2px solid #101c28; outline: 1px solid #2a6da8; outline-offset: -1px; padding: 5px 11px; }
.btn-default { color: #333; background: #eee; border-color: #eee; }
.foot-rule { margin: 70px 0 20px; border: 0; border-top: 1px solid #eee; }
.copyright { margin: 0; }

/* sidebar */
.sidebar { width: 55px; background: #f7f7f7; border-left: 1px solid #b8b8b8; display: flex; flex-direction: column; align-items: center; justify-content: space-between; }
.side-icons { display: flex; flex-direction: column; align-items: center; gap: 20px; padding-top: 11px; }
.side-plus { margin-top: 2px; }
.side-bottom { display: flex; flex-direction: column; align-items: center; gap: 14px; padding-bottom: 13px; }
.side-rule { width: 28px; height: 1px; background: #bbb; margin-bottom: 1px; }

/* explorer */
.explorer { position: absolute; left: 767px; top: 216px; width: 1124px; height: 725px; background: #fff; border: 1px solid #e4e4e4; border-top: 0; box-shadow: 0 0 24px rgba(0,0,0,.35); font-family: "Noto Sans", sans-serif; font-size: 11px; color: #222; display: flex; flex-direction: column; }
.ex-title { height: 31px; flex: none; display: flex; align-items: center; padding-left: 8px; }
.ex-bar { width: 1px; height: 16px; background: #9a9a9a; margin: 0 8px 0 7px; }
.qa-doc { margin-right: 6px; }
.qa-arrow { margin-left: 6px; margin-right: 1px; }
.ex-name { font-size: 11px; margin-left: -2px; }
.ex-wbtns { margin-left: auto; display: flex; gap: 33px; padding-right: 18px; }
.ex-tabs { height: 23px; flex: none; display: flex; position: relative; align-items: center; }
.ex-tab { height: 23px; line-height: 23px; text-align: center; font-size: 11px; }
.file-tab { width: 56px; background: #0063b1; color: #fff; }
.active-tab { width: 56px; background: #f5f6f7; border: 1px solid #dadbdc; border-bottom: 0; line-height: 22px; position: relative; z-index: 1; height: 24px; margin-bottom: -1px; }
.share-tab { width: 70px; margin-left: 7px; }
.view-tab { width: 38px; margin-left: 20px; }
.ribbon-up { margin-left: auto; margin-right: 17px; }
.help { width: 16px; height: 16px; border-radius: 50%; background: #0063b1; color: #fff; font-weight: 700; font-size: 12px; line-height: 16px; text-align: center; margin-right: 3px; }
.ribbon { height: 93px; flex: none; background: #f5f6f7; border-top: 1px solid #dadbdc; border-bottom: 1px solid #dadbdc; display: flex; align-items: flex-start; padding-top: 2px; }
.rgroup { height: 86px; border-right: 1px solid #dadbdc; display: flex; flex-direction: column; }
.g-port { width: 312px; }
.g-org { width: 193px; }
.g-new { width: 173px; }
.g-open { width: 149px; }
.g-sel { width: 160px; }
.rbody { height: 71px; display: flex; align-items: flex-start; }
.rlabel { height: 15px; padding-top: 3px; line-height: 12px; text-align: center; font-size: 11px; color: #444; }
.rlg { display: flex; flex-direction: column; align-items: center; text-align: center; padding-top: 3px; font-size: 11px; line-height: 13.500px; }
.rlg > svg { margin: 1px 0 3px; }
.rlg span { display: block; white-space: nowrap; }
.off { color: #6f7a85; }
.w36 { width: 36px; } .w38 { width: 38px; } .w42 { width: 42px; } .w44 { width: 44px; } .w46 { width: 46px; } .w72 { width: 72px; } .w84 { width: 84px; }
.ml2 { margin-left: 2px; } .ml3 { margin-left: 3px; } .ml4 { margin-left: 4px; } .ml10 { margin-left: 9px; }
.gap3 { margin-left: 3px; } .gap4 { margin-left: 4px; } .gap5 { margin-left: 5px; }
.rsep { width: 1px; height: 56px; background: #dadbdc; margin: 7px 0 0 6px; }
.rsmall { padding-top: 2px; }
.rsmall > div { height: 22px; display: flex; align-items: center; gap: 5px; white-space: nowrap; }
.rsmall.tight > div { gap: 3px; }
.caret, .caret-off { display: inline-block; width: 0; height: 0; margin-left: 3px; border: 3px solid transparent; border-top: 4px solid #222; border-bottom: 0; vertical-align: middle; }
.caret-off { border-top-color: #b0b8c0; }
.addr-row { height: 42px; flex: none; display: flex; align-items: center; position: relative; }
.nav-back { margin-left: 11px; }
.nav-fwd { margin-left: 14px; }
.nav-drop { margin-left: 11px; color: #8a8a8a; }
.nav-up { margin-left: 9px; }
.addr-box { width: 688px; height: 28px; margin-left: 5px; border: 1px solid #d9d9d9; display: flex; align-items: center; padding-left: 3px; gap: 8px; font-size: 11px; }
.addr-box .chev { color: #777; }
.addr-folder { margin-right: -4px; }
.addr-drop { margin-left: auto; margin-right: 5px; }
.addr-refresh { width: 31px; height: 100%; border-left: 1px solid #d9d9d9; display: flex; align-items: center; justify-content: center; margin-left: -4px; }
.search-box { width: 303px; height: 28px; margin-left: 12px; border: 1px solid #d9d9d9; display: flex; align-items: center; padding-left: 13px; gap: 14px; color: #6d6d6d; font-size: 11px; }
.ex-main { flex: 1; min-height: 0; display: flex; }
.tree-wrap { width: 157px; display: flex; }
.tree { width: 140px; padding-top: 16px; overflow: hidden; font-size: 11px; }
.tr { height: 24px; display: flex; align-items: center; white-space: nowrap; }
.tr .tw { width: 14px; height: 14px; margin-right: 6px; color: #777; flex: none; }
.tr svg + span { margin-left: 5px; }
.lv1 { padding-left: 4px; }
.lv2 { padding-left: 12px; }
.sect { margin-top: 8px; }
.sel { background: #cce8ff; }
.pinned { margin-left: auto; margin-right: 3px; }
.vscroll { width: 16px; background: #f0f0f0; position: relative; display: flex; flex-direction: column; align-items: center; }
.sb-arrow { margin-top: 5px; color: #555; }
.sb-arrow:first-child { transform: rotate(180deg); margin-bottom: 4px; }
.sb-thumb { width: 16px; height: 391px; background: #cdcdcd; }
.sb-down { margin-top: auto; margin-bottom: 5px; }
.files { flex: 1; font-size: 11px; color: #6d6d6d; padding-left: 4px; }
.fhead, .frow { display: grid; grid-template-columns: 272px 143px 120px 80px; }
.fhead { height: 25px; margin-bottom: 6px; }
.fh { padding-left: 7px; line-height: 25px; color: #4c607a; border-right: 1px solid #e5e5e5; position: relative; }
.sorted { background: #d9ebf9; padding-left: 17px; border-right: 0; }
.sort-up { position: absolute; left: 136px; top: 0; }
.fh-drop { position: absolute; right: 0; top: 0; width: 16px; height: 25px; border-left: 1px solid #bcd3e8; display: flex; align-items: center; justify-content: center; color: #666; }
.frow { height: 21px; line-height: 21px; padding-left: 0; }
.frow > div { padding-left: 7px; white-space: nowrap; overflow: hidden; }
.frow > .fname { display: flex; align-items: center; gap: 3px; padding-left: 19px; color: #222; }
.frow > .fsize { padding: 0 7px 0 0; text-align: right; }
.ex-status { height: 24px; flex: none; display: flex; align-items: center; position: relative; }
.count { width: 89px; padding-left: 14px; border-right: 1px solid #e8e8e8; color: #444; font-size: 11px; }
.view-details { margin-left: auto; width: 22px; height: 23px; background: #cce8ff; border: 1px solid #26a0da; display: flex; align-items: center; justify-content: center; }
.view-thumb { margin: 0 8px 0 4px; }
```
